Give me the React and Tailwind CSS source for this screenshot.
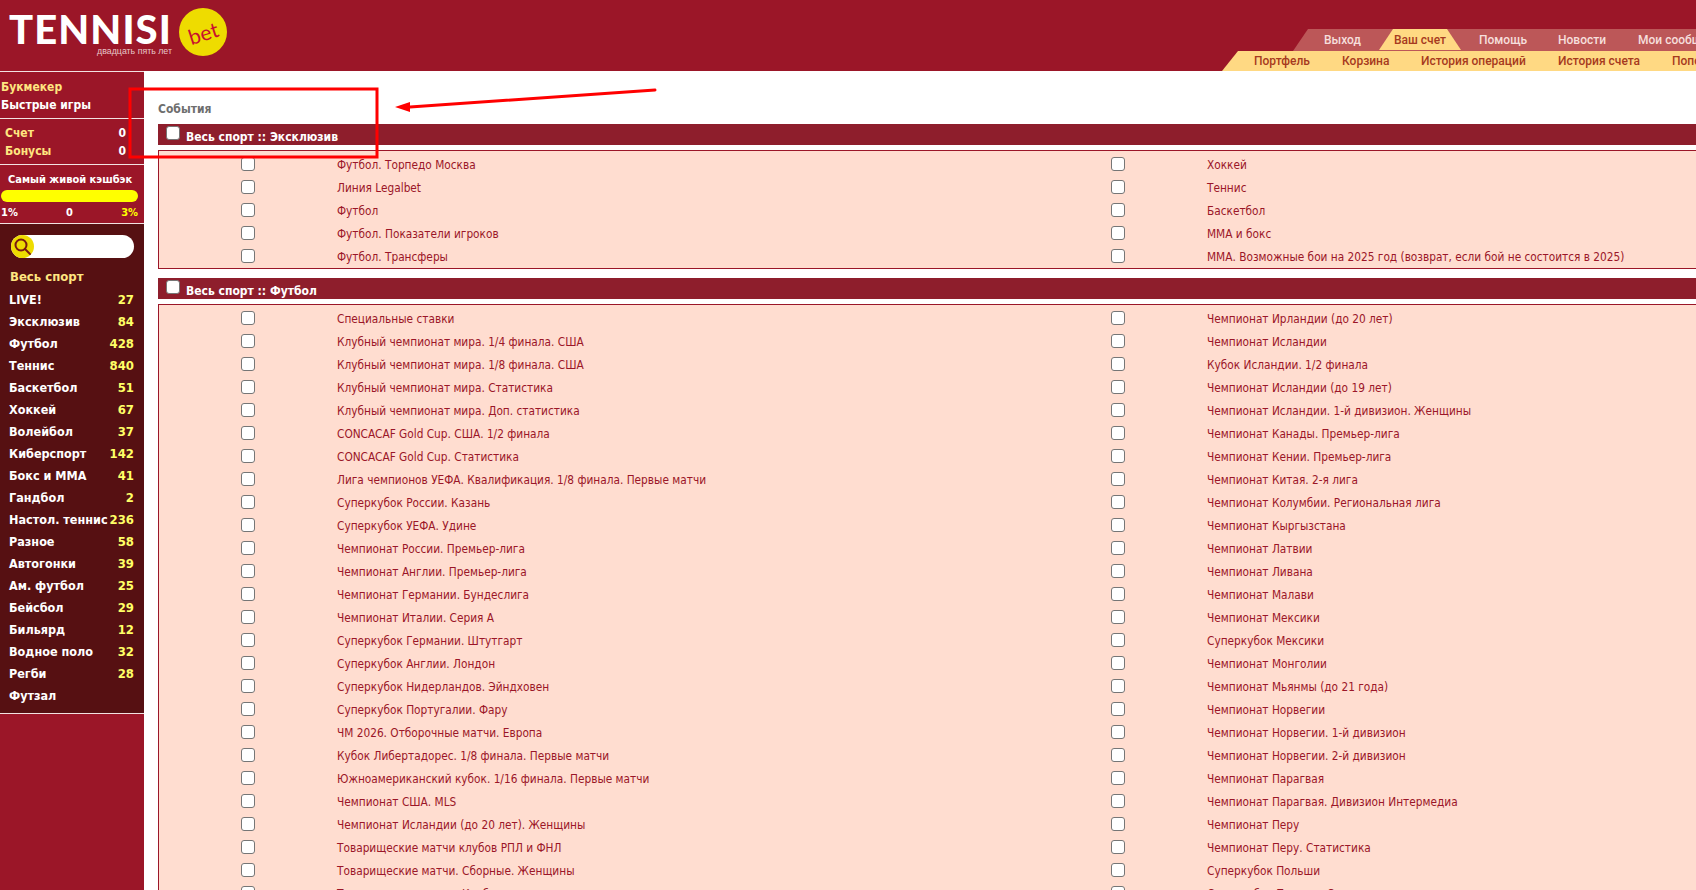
import React from "react";

const menuItems = [
  ["LIVE!", "27"],
  ["Эксклюзив", "84"],
  ["Футбол", "428"],
  ["Теннис", "840"],
  ["Баскетбол", "51"],
  ["Хоккей", "67"],
  ["Волейбол", "37"],
  ["Киберспорт", "142"],
  ["Бокс и ММА", "41"],
  ["Гандбол", "2"],
  ["Настол. теннис", "236"],
  ["Разное", "58"],
  ["Автогонки", "39"],
  ["Ам. футбол", "25"],
  ["Бейсбол", "29"],
  ["Бильярд", "12"],
  ["Водное поло", "32"],
  ["Регби", "28"],
  ["Футзал", ""],
];

const exclusiveRows = [
  ["Футбол. Торпедо Москва", "Хоккей"],
  ["Линия Legalbet", "Теннис"],
  ["Футбол", "Баскетбол"],
  ["Футбол. Показатели игроков", "ММА и бокс"],
  ["Футбол. Трансферы", "ММА. Возможные бои на 2025 год (возврат, если бой не состоится в 2025)"],
];

const footballRows = [
  ["Специальные ставки", "Чемпионат Ирландии (до 20 лет)"],
  ["Клубный чемпионат мира. 1/4 финала. США", "Чемпионат Исландии"],
  ["Клубный чемпионат мира. 1/8 финала. США", "Кубок Исландии. 1/2 финала"],
  ["Клубный чемпионат мира. Статистика", "Чемпионат Исландии (до 19 лет)"],
  ["Клубный чемпионат мира. Доп. статистика", "Чемпионат Исландии. 1-й дивизион. Женщины"],
  ["CONCACAF Gold Cup. США. 1/2 финала", "Чемпионат Канады. Премьер-лига"],
  ["CONCACAF Gold Cup. Статистика", "Чемпионат Кении. Премьер-лига"],
  ["Лига чемпионов УЕФА. Квалификация. 1/8 финала. Первые матчи", "Чемпионат Китая. 2-я лига"],
  ["Суперкубок России. Казань", "Чемпионат Колумбии. Региональная лига"],
  ["Суперкубок УЕФА. Удине", "Чемпионат Кыргызстана"],
  ["Чемпионат России. Премьер-лига", "Чемпионат Латвии"],
  ["Чемпионат Англии. Премьер-лига", "Чемпионат Ливана"],
  ["Чемпионат Германии. Бундеслига", "Чемпионат Малави"],
  ["Чемпионат Италии. Серия А", "Чемпионат Мексики"],
  ["Суперкубок Германии. Штутгарт", "Суперкубок Мексики"],
  ["Суперкубок Англии. Лондон", "Чемпионат Монголии"],
  ["Суперкубок Нидерландов. Эйндховен", "Чемпионат Мьянмы (до 21 года)"],
  ["Суперкубок Португалии. Фару", "Чемпионат Норвегии"],
  ["ЧМ 2026. Отборочные матчи. Европа", "Чемпионат Норвегии. 1-й дивизион"],
  ["Кубок Либертадорес. 1/8 финала. Первые матчи", "Чемпионат Норвегии. 2-й дивизион"],
  ["Южноамериканский кубок. 1/16 финала. Первые матчи", "Чемпионат Парагвая"],
  ["Чемпионат США. MLS", "Чемпионат Парагвая. Дивизион Интермедиа"],
  ["Чемпионат Исландии (до 20 лет). Женщины", "Чемпионат Перу"],
  ["Товарищеские матчи клубов РПЛ и ФНЛ", "Чемпионат Перу. Статистика"],
  ["Товарищеские матчи. Сборные. Женщины", "Суперкубок Польши"],
  ["Товарищеские матчи. Клубы", "Суперкубок Польши. Статистика"],
];

const Check = ({ className = "" }) => (
  <span className={`block w-[14px] h-[14px] bg-white rounded-[3px] border border-[#767676] ${className}`} />
);

const Row = ({ left, right }) => (
  <div className="flex h-[23px] items-center text-[11.75px] text-[#9b1628]">
    <div className="w-[178px] flex justify-center -mt-[2px]"><Check /></div>
    <div className="w-[692px] whitespace-nowrap pt-[2px]">{left}</div>
    <div className="w-[178px] flex justify-center -mt-[2px]"><Check /></div>
    <div className="whitespace-nowrap pt-[2px]">{right}</div>
  </div>
);

const Section = ({ title, rows }) => (
  <div className="mb-[9px]">
    <div className="h-[21px] bg-[#8e1e2c] flex items-center pl-[8px] gap-[6px] text-white font-bold text-[12px]">
      <Check className="mb-[3px]" />
      <span className="mt-[4px]">{title}</span>
    </div>
    <div className="mt-[5px] pt-[2px] bg-[#ffddd0] border border-[#9b1628]">
      {rows.map((r) => (
        <Row key={r[0]} left={r[0]} right={r[1]} />
      ))}
    </div>
  </div>
);

export default function App() {
  return (
    <div className="w-[1696px] h-[890px] overflow-hidden bg-white font-['DejaVu_Sans_Condensed','Liberation_Sans',sans-serif] relative">
      {/* Header */}
      <header className="h-[71px] bg-[#9b1628] flex justify-between relative">
        <div className="pl-[9px] pt-[9px] flex items-start">
          <div className="flex flex-col items-end">
            <span className="text-white font-['Lato',sans-serif] font-black text-[40px] leading-[40px] tracking-[1.1px]">TENNISI</span>
            <span className="text-[#e8c6c8] text-[8.8px] leading-[9px] -mt-[2px] font-['Liberation_Sans',sans-serif]">двадцать пять лет</span>
          </div>
          <div className="ml-[7px] -mt-[1px] w-[48px] h-[48px] rounded-full bg-[#eedc00] flex items-center justify-center">
            <span className="text-[#c8102e] text-[21px] leading-none font-['Lato',sans-serif] -rotate-[18deg]">bet</span>
          </div>
        </div>
        <div className="absolute left-[1222px] top-[29px] flex flex-col font-['Roboto',sans-serif] font-medium text-[12px]">
          <div className="ml-[71px] h-[22px] w-[500px] bg-[#bc5758] [clip-path:polygon(15px_0,100%_0,100%_100%,0_100%)] flex items-center text-[#f6dfdc] relative">
            <span className="absolute left-[31px]">Выход</span>
            <span className="absolute left-[86px] w-[82px] h-[21px] top-0 bg-[#ffd983] [clip-path:polygon(14px_0,68px_0,100%_100%,0_100%)] text-[#a63a20] flex items-center justify-center">Ваш счет</span>
            <span className="absolute left-[186px]">Помощь</span>
            <span className="absolute left-[265px]">Новости</span>
            <span className="absolute left-[345px] whitespace-nowrap">Мои сообщения</span>
          </div>
          <div className="h-[20px] w-[560px] bg-[#ffd983] [clip-path:polygon(16px_0,100%_0,100%_100%,0_100%)] text-[#a63a20] relative flex items-center">
            <span className="absolute left-[32px]">Портфель</span>
            <span className="absolute left-[120px]">Корзина</span>
            <span className="absolute left-[199px]">История операций</span>
            <span className="absolute left-[336px]">История счета</span>
            <span className="absolute left-[450px] whitespace-nowrap">Пополнить</span>
          </div>
        </div>
      </header>

      <div className="flex h-[819px]">
        {/* Sidebar */}
        <aside className="w-[144px] shrink-0 bg-[#9b1628] text-[12px] font-bold">
          <div className="border-t border-b border-[#f3e2e2] h-[48px] pl-[1px] pt-[6px] leading-[18px]">
            <div className="text-[#ffe680]">Букмекер</div>
            <div className="text-white">Быстрые игры</div>
          </div>
          <div className="border-b border-[#f3e2e2] h-[46px] pt-[5px] pl-[5px] pr-[18px] leading-[18px] text-[#ffe680]">
            <div className="flex justify-between"><span>Счет</span><span className="text-white">0</span></div>
            <div className="flex justify-between"><span>Бонусы</span><span className="text-white">0</span></div>
          </div>
          <div className="border-b border-[#f3e2e2] h-[59px] text-[11px]">
            <div className="text-white pl-[8px] pt-[8px] leading-[14px] whitespace-nowrap">Самый живой кэшбэк</div>
            <div className="ml-[1px] w-[137px] mt-[3px] h-[12px] rounded-full bg-[#ffff00]" />
            <div className="flex justify-between w-[138px] pl-[1px] mt-[4px] leading-[14px] text-white">
              <span>1%</span><span>0</span><span className="text-[#ffff00]">3%</span>
            </div>
          </div>
          <div className="bg-[#561012] border-b border-[#f3e2e2] pb-[6px]">
            <div className="pt-[11px] pl-[11px]">
              <div className="w-[123px] h-[23px] rounded-full bg-white relative">
                <div className="w-[23px] h-[23px] rounded-full bg-[#eedc00] flex items-center justify-center">
                  <svg width="19" height="19" viewBox="0 0 19 19" fill="none" stroke="#7a1a10" strokeWidth="2">
                    <circle cx="8" cy="8" r="5.5" />
                    <path d="M12 12l5 5" strokeLinecap="round" />
                  </svg>
                </div>
              </div>
            </div>
            <div className="pl-[10px] pt-[9px] h-[31px] text-[13px] leading-[20px] text-[#ffe680]">Весь спорт</div>
            {menuItems.map(([name, count]) => (
              <div key={name} className="flex justify-between h-[22px] items-center pl-[9px] pr-[10px] text-[12.5px] text-white whitespace-nowrap">
                <span>{name}</span>
                <span className="text-[#ffff66] text-[13px]">{count}</span>
              </div>
            ))}
          </div>
        </aside>

        {/* Main */}
        <main className="pl-[14px] w-[1760px] shrink-0">
          <div className="h-[53px] pt-[30px] text-[12px] font-bold text-[#6e6e6e] leading-[16px]">События</div>
          <Section title="Весь спорт :: Эксклюзив" rows={exclusiveRows} />
          <Section title="Весь спорт :: Футбол" rows={footballRows} />
        </main>
      </div>

      {/* Red annotation */}
      <svg className="absolute left-0 top-0 pointer-events-none" width="1696" height="890">
        <path d="M130 89H377V157H130Z" fill="none" stroke="#ff0000" strokeWidth="3" />
        <path d="M655 90L410 107" stroke="#ff0000" strokeWidth="3" strokeLinecap="round" />
        <path d="M395 107L410 102L410 112Z" fill="#ff0000" />
      </svg>
    </div>
  );
}
